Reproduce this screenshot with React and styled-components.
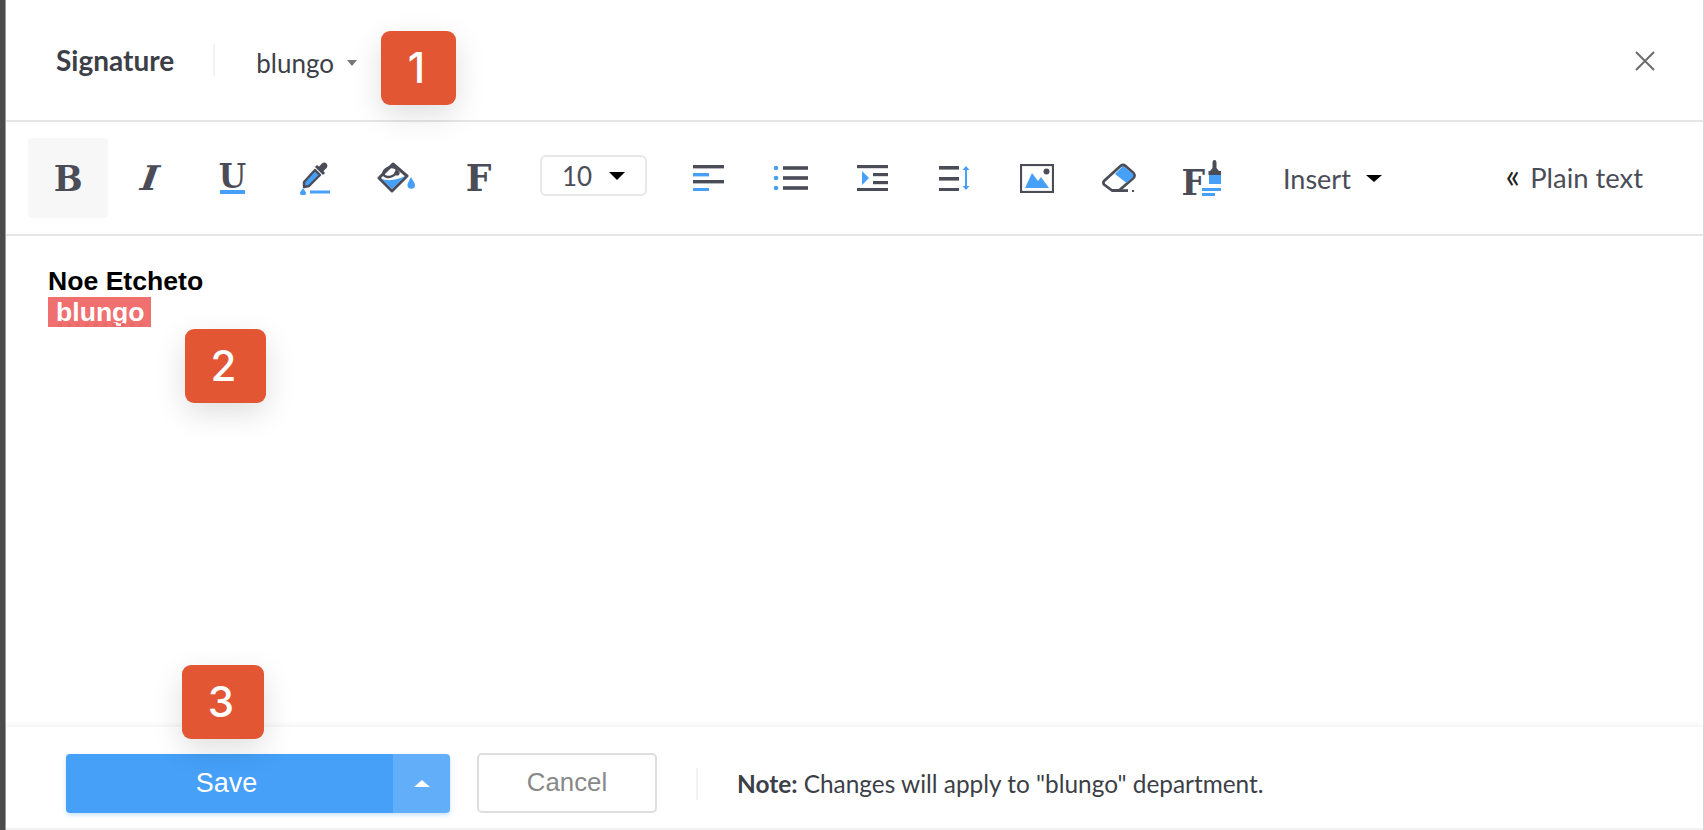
import React from 'react'
import styled, { createGlobalStyle } from 'styled-components'

const DARK = '#4a4d57'
const BLUE = '#46a0f8'

const GlobalStyle = createGlobalStyle`
  html, body {
    margin: 0;
    padding: 0;
    background: #fff;
  }
  * {
    box-sizing: border-box;
  }
`

const Page = styled.div`
  position: relative;
  width: 1704px;
  height: 830px;
  display: flex;
  overflow: hidden;
  font-family: Lato, "Open Sans", sans-serif;
  color: #3c3f47;
`
const Strip = styled.div`
  width: 6px;
  flex: none;
  background: #4b4b4b;
  border-right: 1px solid #9a9a9a;
`
const Dialog = styled.div`
  flex: 1;
  display: flex;
  flex-direction: column;
  background: #fff;
  border-right: 1px solid #d8d8d8;
`
const Header = styled.div`
  height: 122px;
  flex: none;
  display: flex;
  align-items: center;
  padding: 0 48px 0 50px;
  border-bottom: 2px solid #e6e6e6;
`
const Title = styled.h2`
  margin: 0;
  font-size: 28px;
  font-weight: 700;
  color: #3c3f47;
`
const Divider = styled.div`
  width: 2px;
  height: 32px;
  margin: 0 ${p => p.$right}px 0 ${p => p.$left}px;
  background: #f2f2f2;
`
const Department = styled.div`
  display: flex;
  align-items: center;
  gap: 13px;
  font-size: 26px;
  padding-top: 5px;
`
const Caret = styled.span`
  width: 0;
  height: 0;
  border-left: ${p => p.$size}px solid transparent;
  border-right: ${p => p.$size}px solid transparent;
  ${p => (p.$up ? 'border-bottom' : 'border-top')}: ${p => p.$h}px solid ${p => p.$color};
`
const Close = styled.svg`
  width: 20px;
  height: 20px;
  margin-left: auto;
  margin-top: 2px;
  stroke: #6b6b6b;
  stroke-width: 2;
  fill: none;
`
const Toolbar = styled.div`
  height: 114px;
  flex: none;
  display: flex;
  align-items: center;
  gap: 2px;
  padding: 0 60px 0 22px;
  border-bottom: 2px solid #e6e6e6;
`
const Tool = styled.div`
  position: relative;
  width: 80px;
  height: 80px;
  flex: none;
  display: flex;
  align-items: center;
  justify-content: center;
  border-radius: 4px;
  background: ${p => (p.$active ? '#f7f7f7' : 'transparent')};
`
const Letter = styled.span`
  font-family: "DejaVu Serif", serif;
  font-weight: 700;
  font-style: ${p => (p.$italic ? 'italic' : 'normal')};
  font-size: ${p => p.$size || 34}px;
  line-height: 30px;
  color: ${DARK};
  display: inline-block;
  transform: ${p => (p.$italic ? 'skewX(-8deg) scaleX(1.1)' : 'scaleX(.95)')};
`
const UnderLetter = styled(Letter)`
  font-size: 33px;
  line-height: 27px;
`
const UnderlineWrap = styled.div`
  display: flex;
  flex-direction: column;
  align-items: center;
`
const UnderBar = styled.div`
  width: 25px;
  height: 4px;
  background: ${BLUE};
`
const SizeSelect = styled.div`
  width: 107px;
  height: 41px;
  flex: none;
  display: flex;
  align-items: center;
  gap: 17px;
  padding: 2px 0 0 20px;
  margin: 0 20px 6px;
  border: 2px solid #e8e8e8;
  border-radius: 6px;
  font-size: 26px;
  color: ${DARK};
`
const Icon = styled.svg`
  display: block;
  flex: none;
`
const Insert = styled.div`
  display: flex;
  align-items: center;
  gap: 15px;
  margin-left: 40px;
  font-size: 27px;
  color: ${DARK};
`
const PlainText = styled.div`
  margin-left: auto;
  display: flex;
  align-items: center;
  gap: 10px;
  margin-bottom: 2px;
  font-size: 27.4px;
  color: ${DARK};
`
const Quote = styled.span`
  color: #222;
  font-size: 34px;
  line-height: 1;
  margin-top: -5px;
`
const Body = styled.div`
  flex: 1;
  padding: 30px 0 0 42px;
  font-family: "Liberation Sans", Arial, sans-serif;
  font-weight: 700;
  font-size: 26.6px;
  line-height: 31px;
  color: #000;
`
const Name = styled.div`
  height: 31px;
`
const Chip = styled.div`
  position: relative;
  width: 103px;
  height: 30px;
  padding-left: 8px;
  overflow: hidden;
  background: #f07070;
  color: #fff;
  line-height: 31px;
  &::after {
    content: '';
    position: absolute;
    left: 8px;
    right: 8px;
    bottom: 0;
    height: 5px;
    background: radial-gradient(circle at 4px 3px, #e96a6a 2px, transparent 2.5px) 0 0 / 9px 5px repeat-x;
  }
`
const Footer = styled.div`
  height: 103px;
  flex: none;
  display: flex;
  align-items: center;
  padding: 12px 0 0 60px;
  box-shadow: 0 -2px 5px rgba(0, 0, 0, .05);
  border-bottom: 2px solid #f2f2f2;
  z-index: 1;
  background: #fff;
  font-family: "Liberation Sans", Arial, sans-serif;
`
const SaveGroup = styled.div`
  width: 384px;
  height: 59px;
  display: flex;
  border-radius: 4px;
  overflow: hidden;
  box-shadow: 0 2px 4px rgba(70, 160, 248, .3);
  color: #fff;
  font-size: 27px;
`
const SaveLabel = styled.div`
  flex: 1;
  display: flex;
  align-items: center;
  justify-content: center;
  padding-right: 6px;
  background: ${BLUE};
`
const SaveMenu = styled.div`
  width: 57px;
  display: flex;
  align-items: center;
  justify-content: center;
  background: #63aef9;
`
const Cancel = styled.div`
  width: 180px;
  height: 60px;
  margin: 0 0 2px 27px;
  display: flex;
  align-items: center;
  justify-content: center;
  border: 2px solid #dedede;
  border-radius: 5px;
  color: #888;
  font-size: 25.8px;
`
const Note = styled.div`
  font-family: Lato, "Open Sans", sans-serif;
  font-size: 24.4px;
  color: #3c3f47;
  b {
    font-weight: 700;
  }
`
const Badge = styled.div`
  position: absolute;
  left: ${p => p.$left}px;
  top: ${p => p.$top}px;
  width: ${p => p.$width}px;
  height: 74px;
  display: flex;
  align-items: center;
  justify-content: center;
  padding: 0 4px 2px 0;
  border-radius: 9px;
  background: #e25633;
  color: #fff;
  font-family: Inter, Roboto, sans-serif;
  font-weight: 500;
  font-size: 42px;
  box-shadow: 0 10px 30px rgba(0, 0, 0, .13);
  z-index: 2;
`

const DropperIcon = () => (
  <Icon width="31" height="34" viewBox="0 0 31 34">
    <path d="M5 21 L16 9 L21 14 L10 25 L5 26 Z" fill={BLUE} stroke={DARK} strokeWidth="2.4" strokeLinejoin="round" />
    <path d="M16 6 L24 14 L26 12 L24.5 10 L28 6.5 A3.3 3.3 0 0 0 23.5 2 L20 5.5 L18 4 Z" fill={DARK} />
    <path d="M4 27 C2 30 1 31 1 32 A3 2.5 0 0 0 7 32 C7 31 6 30 4 27 Z" fill={BLUE} />
    <rect x="11" y="29.5" width="20" height="3" fill={BLUE} />
  </Icon>
)

const BucketIcon = () => (
  <Icon width="39" height="32" viewBox="0 0 39 32">
    <path d="M2 16 L16 2 L30 14 L15 29 Z" fill="#fff" stroke={DARK} strokeWidth="3" strokeLinejoin="round" />
    <path d="M4 16 C10 20 20 18 28 14 L15 27 Z" fill={BLUE} />
    <ellipse cx="13" cy="10" rx="7" ry="4.6" transform="rotate(-20 13 10)" fill="none" stroke={DARK} strokeWidth="2.4" />
    <circle cx="20" cy="11" r="2.6" fill={DARK} />
    <path d="M34 15 C32 19 30.5 21 30.5 23 A3.6 3.6 0 0 0 38 23 C38 21 36 19 34 15 Z" fill={BLUE} />
  </Icon>
)

const AlignIcon = () => (
  <Icon width="32" height="26" viewBox="0 0 32 26">
    <rect x="0" y="0" width="31" height="3.4" fill={DARK} />
    <rect x="0" y="8" width="16" height="3.4" fill={BLUE} />
    <rect x="0" y="15" width="31" height="3.4" fill={DARK} />
    <rect x="0" y="23" width="16" height="3" fill={BLUE} />
  </Icon>
)

const ListIcon = () => (
  <Icon width="36" height="26" viewBox="0 0 36 26">
    <circle cx="3" cy="3" r="2.3" fill={BLUE} />
    <circle cx="3" cy="13" r="2.3" fill={BLUE} />
    <circle cx="3" cy="23" r="2.3" fill={BLUE} />
    <rect x="10" y="1.2" width="25" height="3.6" fill={DARK} />
    <rect x="10" y="11.2" width="25" height="3.6" fill={DARK} />
    <rect x="10" y="21.2" width="25" height="3.6" fill={DARK} />
  </Icon>
)

const IndentIcon = () => (
  <Icon width="32" height="26" viewBox="0 0 32 26">
    <rect x="0" y="0" width="31" height="3.2" fill={DARK} />
    <path d="M5 6 L12 13 L5 20 Z" fill={BLUE} />
    <rect x="16" y="8" width="15" height="3.2" fill={DARK} />
    <rect x="16" y="16" width="15" height="3.2" fill={DARK} />
    <rect x="0" y="23" width="31" height="3.2" fill={DARK} />
  </Icon>
)

const LineHeightIcon = () => (
  <Icon width="32" height="26" viewBox="0 0 32 26">
    <rect x="0" y="1" width="20" height="3.6" fill={DARK} />
    <rect x="0" y="12" width="20" height="3.6" fill={DARK} />
    <rect x="0" y="23" width="20" height="3.6" fill={DARK} />
    <path d="M27 1 L30.5 5 L28 5 L28 21 L30.5 21 L27 25 L23.5 21 L26 21 L26 5 L23.5 5 Z" fill={BLUE} />
  </Icon>
)

const ImageIcon = () => (
  <Icon width="34" height="29" viewBox="0 0 34 29">
    <rect x="1" y="1" width="32" height="27" fill="#fff" stroke={DARK} strokeWidth="2.2" />
    <path d="M5 24 L12 9 L18 17 L21 13 L29 24 Z" fill={BLUE} />
    <circle cx="26.5" cy="7.5" r="3" fill={DARK} />
  </Icon>
)

const EraserIcon = () => (
  <Icon width="35" height="30" viewBox="0 0 35 30">
    <path d="M2 18 L18.5 3 Q21 1 23.5 3 L31.5 10 Q33.5 12.5 31.5 15 L17 27.5 L10 27.5 L2 21.5 Q0.8 19.5 2 18 Z" fill="#fff" stroke={DARK} strokeWidth="2.8" strokeLinejoin="round" />
    <path d="M13 11 L20 4 Q21 3 22.5 4 L31 11 Q32 12.5 31 14 L24.5 20 Z" fill={BLUE} />
    <rect x="16" y="26.2" width="10" height="2.8" fill={DARK} />
    <rect x="30" y="27" width="2" height="2" fill={DARK} />
  </Icon>
)

const BrushIcon = () => (
  <Icon width="19" height="36" viewBox="0 0 19 36">
    <path d="M12.5 0 Q14.5 0 14.5 3 L14.5 8 L17 11 L8 11 L10.5 8 L10.5 3 Q10.5 0 12.5 0 Z" fill={DARK} />
    <rect x="6.5" y="11" width="12.5" height="4" fill={DARK} />
    <rect x="7" y="15" width="12" height="9" fill={BLUE} />
    <rect x="0" y="28" width="19" height="3" fill={BLUE} />
    <rect x="0" y="33" width="13" height="3" fill={BLUE} />
  </Icon>
)

const BrushTool = styled.div`
  display: flex;
  align-items: flex-end;
  margin-top: -1px;
`
const SmallF = styled(Letter)`
  font-size: 35px;
  line-height: 26px;
  margin-right: -4px;
`

const App = () => {
  return (
    <Page>
      <GlobalStyle />
      <Strip />
      <Dialog>
        <Header>
          <Title>Signature</Title>
          <Divider $left={39} $right={41} />
          <Department>
            blungo
            <Caret $size={5.5} $h={6} $color="#777" />
          </Department>
          <Close viewBox="0 0 20 20">
            <path d="M1 1 L19 19 M19 1 L1 19" />
          </Close>
        </Header>
        <Toolbar>
          <Tool $active><Letter $size={36}>B</Letter></Tool>
          <Tool><Letter $italic>I</Letter></Tool>
          <Tool>
            <UnderlineWrap>
              <UnderLetter>U</UnderLetter>
              <UnderBar />
            </UnderlineWrap>
          </Tool>
          <Tool><DropperIcon /></Tool>
          <Tool><BucketIcon /></Tool>
          <Tool><Letter $size={38}>F</Letter></Tool>
          <SizeSelect>
            10
            <Caret $size={8} $h={8} $color="#000" />
          </SizeSelect>
          <Tool><AlignIcon /></Tool>
          <Tool><ListIcon /></Tool>
          <Tool><IndentIcon /></Tool>
          <Tool><LineHeightIcon /></Tool>
          <Tool><ImageIcon /></Tool>
          <Tool><EraserIcon /></Tool>
          <Tool>
            <BrushTool>
              <SmallF>F</SmallF>
              <BrushIcon />
            </BrushTool>
          </Tool>
          <Insert>
            Insert
            <Caret $size={8} $h={7} $color="#000" />
          </Insert>
          <PlainText>
            <Quote>«</Quote>
            Plain text
          </PlainText>
        </Toolbar>
        <Body>
          <Name>Noe Etcheto</Name>
          <Chip>blungo</Chip>
        </Body>
        <Footer>
          <SaveGroup>
            <SaveLabel>Save</SaveLabel>
            <SaveMenu>
              <Caret $up $size={8} $h={7} $color="#fff" />
            </SaveMenu>
          </SaveGroup>
          <Cancel>Cancel</Cancel>
          <Divider $left={39} $right={39} />
          <Note><b>Note:</b> Changes will apply to "blungo" department.</Note>
        </Footer>
      </Dialog>
      <Badge $left={381} $top={31} $width={75}>1</Badge>
      <Badge $left={185} $top={329} $width={81}>2</Badge>
      <Badge $left={182} $top={665} $width={82}>3</Badge>
    </Page>
  )
}

export default App
